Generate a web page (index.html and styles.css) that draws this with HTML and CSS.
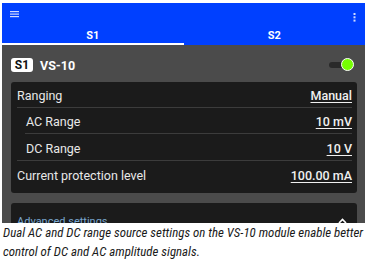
FILE: index.html
```html
<!DOCTYPE html>
<html>
<head>
<meta charset="utf-8">
<link rel="stylesheet" href="styles.css">
</head>
<body>
<div class="frame">
  <div class="appbar">
    <div class="toolbar">
      <svg class="menu" width="9" height="7" viewBox="0 0 9 7"><rect x="0" y="0" width="9" height="1.2" fill="#d0dbff"/><rect x="0" y="2.5" width="9" height="1.2" fill="#d0dbff"/><rect x="0" y="5" width="9" height="1.2" fill="#d0dbff"/></svg>
      <svg class="kebab" width="3" height="9" viewBox="0 0 3 9"><rect x="0.5" y="0" width="2" height="2" fill="#d0dbff"/><rect x="0.5" y="3.3" width="2" height="2" fill="#d0dbff"/><rect x="0.5" y="6.6" width="2" height="2" fill="#d0dbff"/></svg>
    </div>
    <div class="tabs">
      <div class="tab active">S1</div>
      <div class="tab">S2</div>
    </div>
  </div>
  <div class="content">
    <div class="head">
      <span class="badge">S1</span>
      <span class="name">VS-10</span>
      <span class="toggle"><span class="track"></span><span class="knob"></span></span>
    </div>
    <div class="card">
      <div class="row r1"><span>Ranging</span><span class="val">Manual</span></div>
      <div class="row sub r2"><span>AC Range</span><span class="val">10 mV</span></div>
      <div class="row sub r3"><span>DC Range</span><span class="val">10 V</span></div>
      <div class="row last"><span>Current protection level</span><span class="val">100.00 mA</span></div>
    </div>
    <div class="card adv">
      <span class="advlabel">Advanced settings</span>
      <svg class="chev" width="9" height="6" viewBox="0 0 9 6"><path d="M1 5 L4.5 1.5 L8 5" stroke="#fff" stroke-width="1.6" fill="none"/></svg>
    </div>
  </div>
</div>
<p class="caption">Dual AC and DC range source settings on the VS-10 module enable better control of DC and AC amplitude signals.</p>
</body>
</html>
```
FILE: styles.css
```css
html, body { margin: 0; padding: 0; background: #fff; }
body { width: 370px; height: 266px; overflow: hidden; }
.frame {
  margin: 3px 0 0 2px;
  width: 363px;
  height: 220px;
  overflow: hidden;
  font-family: Roboto, "Liberation Sans", sans-serif;
}
.appbar { background: #0040ff; height: 42px; }
.toolbar {
  height: 21px;
  display: flex;
  justify-content: space-between;
  align-items: flex-start;
  padding: 8px 9px 0 8px;
  box-sizing: border-box;
}
.kebab { margin-top: 2px; }
.tabs { display: flex; height: 21px; }
.tab {
  flex: 1;
  text-align: center;
  color: #fff;
  font-weight: 700;
  font-size: 11px;
  line-height: 15px;
  padding-top: 4px;
  height: 21px;
  box-sizing: border-box;
}
.tab.active { border-bottom: 2px solid #fff; }
.content {
  background: #4b4b4b;
  height: 178px;
  padding: 0 8px 0 9px;
}
.head {
  display: flex;
  align-items: center;
  height: 37px;
}
.badge {
  background: #fff;
  color: #111;
  font-weight: 700;
  font-size: 12px;
  border-radius: 3px;
  width: 22px;
  height: 14px;
  line-height: 14px;
  text-align: center;
  margin-top: 3px;
}
.name {
  color: #fff;
  font-weight: 700;
  font-size: 12.5px;
  margin-left: 7px;
  margin-top: 3px;
  flex: 1;
}
.toggle { position: relative; width: 25px; height: 16px; margin-right: 3px; margin-top: 2px; }
.track {
  position: absolute; left: 0; top: 5px;
  width: 16px; height: 6px; border-radius: 3px; background: #2a2a2a;
}
.knob {
  position: absolute; right: 0; top: 1px;
  width: 11px; height: 11px; border-radius: 50%;
  background: #76ff03; border: 1.5px solid #fff;
}
.card {
  background: #1b1b1b;
  border-radius: 3px;
  padding: 0 5px 0 6px;
}
.row {
  display: flex;
  justify-content: space-between;
  align-items: center;
  height: 26px;
  padding-top: 2px;
  color: #e8e8e8;
  font-size: 12.5px;
  border-bottom: 1px solid #3c3c3c;
  box-sizing: border-box;
}
.row.r3 { height: 27px; }
.row.sub { margin-left: 8px; padding-left: 1px; }
.row.sub + .row.sub { margin-left: 0; padding-left: 9px; }
.row.last { border-bottom: none; height: 32px; padding-top: 0; padding-bottom: 3px; }
.val { text-decoration: underline; text-underline-offset: 2px; font-weight: 500; color: #f0f0f0; }
.adv {
  margin-top: 10px;
  height: 30px;
  display: flex;
  justify-content: space-between;
  align-items: flex-start;
  padding-top: 12px;
  box-sizing: border-box;
}
.advlabel { color: #7aa7cf; font-size: 11px; }
.chev { margin-top: 3px; margin-right: 5px; }
.caption {
  margin: 0 0 0 3px;
  width: 366px;
  font-family: "Liberation Sans Narrow", "Roboto Condensed", "Liberation Sans", sans-serif;
  font-style: italic;
  font-size: 12.9px;
  line-height: 19px;
  color: #1a1a1a;
}
```
